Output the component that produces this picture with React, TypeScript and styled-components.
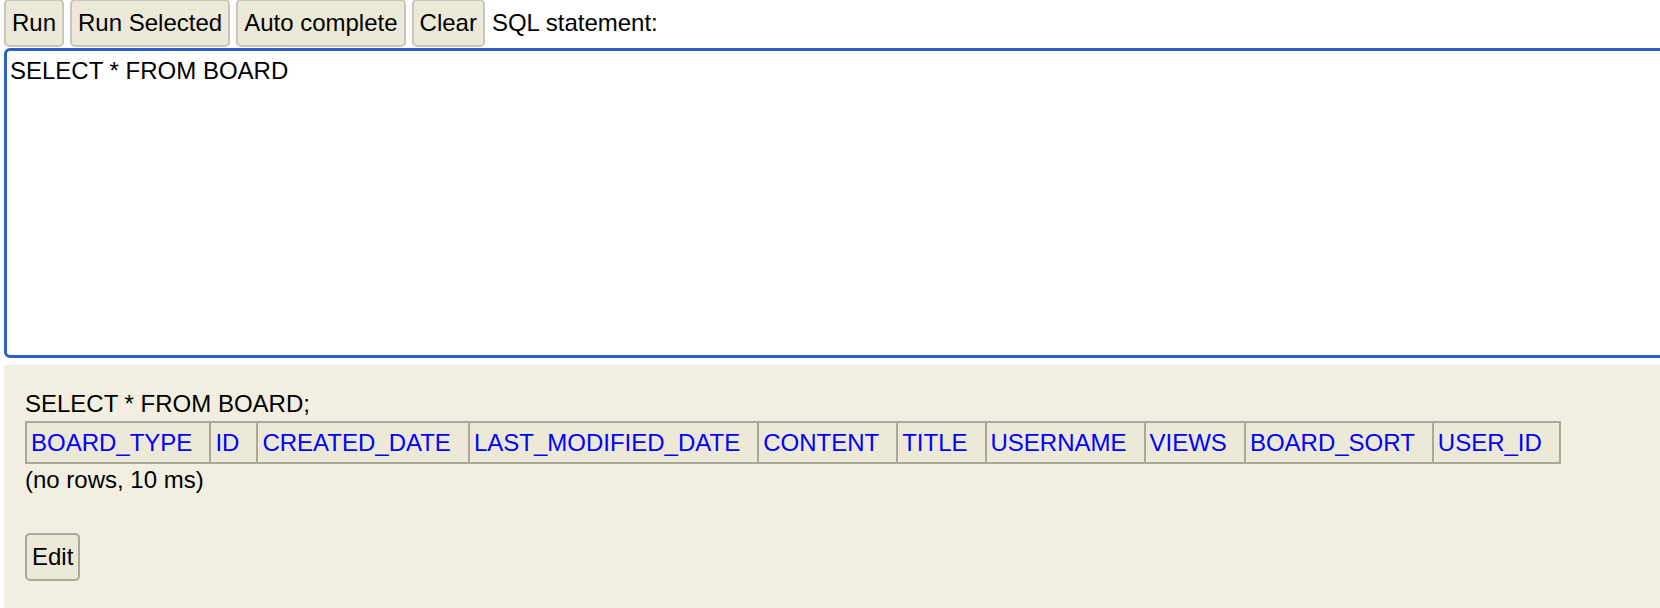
import React from 'react';
import styled, { createGlobalStyle } from 'styled-components';

const columns = [
    'BOARD_TYPE',
    'ID',
    'CREATED_DATE',
    'LAST_MODIFIED_DATE',
    'CONTENT',
    'TITLE',
    'USERNAME',
    'VIEWS',
    'BOARD_SORT',
    'USER_ID'
];

const GlobalStyle = createGlobalStyle`
    html, body {
        margin: 0;
        padding: 0;
        background: #ffffff;
        overflow: hidden;
    }
    body {
        font-family: 'Liberation Sans', Arial, Helvetica, sans-serif;
        font-size: 24px;
        color: #000000;
    }
`;

export default function App() {
    return (
        <>
            <GlobalStyle />
            <Page>
                <Toolbar>
                    <ToolButton>Run</ToolButton>
                    <ToolButton>Run Selected</ToolButton>
                    <ToolButton>Auto complete</ToolButton>
                    <ToolButton>Clear</ToolButton>
                    <Label>SQL statement:</Label>
                </Toolbar>
                <SqlEditor readOnly spellCheck={false} value="SELECT * FROM BOARD" />
                <ResultPane>
                    <Statement>SELECT * FROM BOARD;</Statement>
                    <ResultTable>
                        <thead>
                            <tr>
                                {columns.map((c) => (
                                    <HeaderCell key={c}>
                                        <HeaderLink href="#">{c}</HeaderLink>
                                    </HeaderCell>
                                ))}
                            </tr>
                        </thead>
                    </ResultTable>
                    <Summary>(no rows, 10 ms)</Summary>
                    <EditButton>Edit</EditButton>
                </ResultPane>
            </Page>
        </>
    );
}

const Page = styled.div`
    display: flex;
    flex-direction: column;
    height: 608px;
    padding-left: 4px;
    overflow: hidden;
`;

const Toolbar = styled.div`
    display: flex;
    flex-direction: row;
    align-items: center;
    gap: 6px;
    height: 48px;
    margin-top: -1px;
`;

const ToolButton = styled.button`
    box-sizing: border-box;
    height: 48px;
    padding: 0 6px;
    font-family: inherit;
    font-size: 24px;
    line-height: 28px;
    color: #000000;
    background-color: #ece9d8;
    border: 2px solid #c9c6b8;
    border-radius: 5px;
    white-space: nowrap;
`;

const Label = styled.span`
    line-height: 28px;
    white-space: nowrap;
    margin-left: 1px;
`;

const SqlEditor = styled.textarea`
    display: block;
    box-sizing: border-box;
    flex: none;
    width: calc(100% + 40px);
    height: 310px;
    margin: 1px 0 0 0;
    padding: 6px 3px;
    font-family: inherit;
    font-size: 24px;
    line-height: 28px;
    color: #000000;
    background: #ffffff;
    border: 3px solid #2a60c8;
    border-radius: 6px;
    outline: none;
    resize: none;
    overflow: hidden;
`;

const ResultPane = styled.div`
    flex: 1;
    margin-top: 7px;
    padding: 25px 0 0 21px;
    background-color: #f2efe2;
`;

const Statement = styled.div`
    line-height: 28px;
`;

const ResultTable = styled.table`
    border-collapse: collapse;
    margin-top: 3px;
    border: 2px solid #aca899;
`;

const HeaderCell = styled.th`
    padding: 6px 17px 6px 4px;
    text-align: left;
    font-weight: normal;
    line-height: 27px;
    white-space: nowrap;
    background-color: #ece9d8;
    border: 2px solid #aca899;
`;

const HeaderLink = styled.a`
    color: #0000ff;
    text-decoration: none;
`;

const Summary = styled.div`
    margin-top: 2px;
    line-height: 28px;
`;

const EditButton = styled.button`
    display: block;
    box-sizing: border-box;
    margin-top: 39px;
    padding: 8px 5px;
    font-family: inherit;
    font-size: 24px;
    line-height: 28px;
    color: #000000;
    background-color: #ece9d8;
    border: 2px solid #aca899;
    border-radius: 5px;
`;
